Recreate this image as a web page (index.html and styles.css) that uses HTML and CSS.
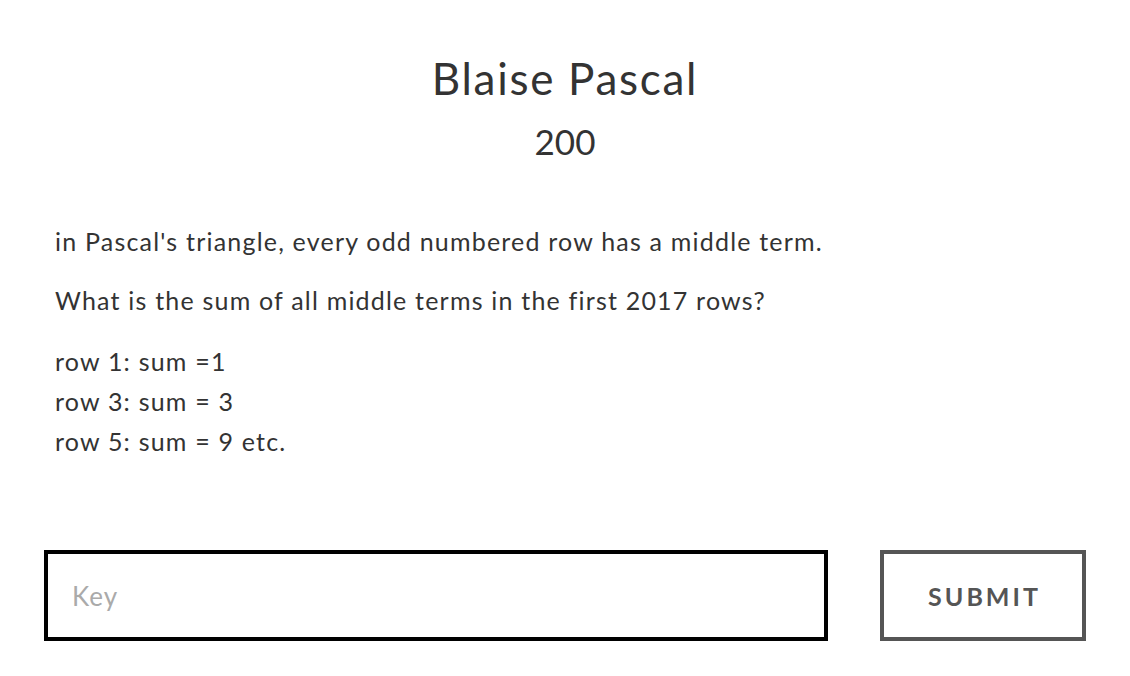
FILE: index.html
```html
<!DOCTYPE html>
<html>
<head>
<meta charset="utf-8">
<link rel="stylesheet" href="styles.css">
</head>
<body>
<div class="page">
  <header class="head">
    <h1 class="title">Blaise Pascal</h1>
    <div class="points">200</div>
  </header>
  <section class="desc">
    <p>in Pascal's triangle, every odd numbered row has a middle term.</p>
    <p>What is the sum of all middle terms in the first 2017 rows?</p>
    <p>row 1: sum =1<br>row 3: sum = 3<br>row 5: sum = 9 etc.</p>
  </section>
  <form class="answer">
    <input class="key" type="text" placeholder="Key">
    <button class="submit" type="button">SUBMIT</button>
  </form>
</div>
</body>
</html>
```
FILE: styles.css
```css
html, body {
  margin: 0;
  padding: 0;
  background: #fff;
}
body {
  font-family: Lato, "Open Sans", sans-serif;
  color: #333;
}
.page {
  padding: 0 44px 0 44px;
}
.head {
  text-align: center;
  padding-top: 48px;
}
.title {
  margin: 0;
  font-size: 44px;
  font-weight: 400;
  line-height: 60px;
  letter-spacing: 1.7px;
}
.points {
  font-size: 35px;
  line-height: 60px;
  padding-top: 3px;
}
.desc {
  margin-top: 50px;
  padding: 0 11px;
  font-size: 25px;
  line-height: 40px;
  letter-spacing: 1.2px;
}
.desc p {
  margin: 0 0 21px 0;
}
.desc p:first-child {
  margin-bottom: 19px;
}
.desc p:last-child {
  margin-bottom: 0;
}
.answer {
  display: flex;
  gap: 52px;
  margin-top: 89px;
}
.key {
  flex: 1;
  height: 91px;
  box-sizing: border-box;
  border: 4px solid #000;
  padding: 0 24px;
  font-family: Lato, sans-serif;
  font-size: 26px;
  letter-spacing: 1px;
  color: #333;
  outline: none;
}
.key::placeholder {
  color: #aaa;
}
.submit {
  width: 206px;
  height: 91px;
  box-sizing: border-box;
  border: 4px solid #555;
  background: #fff;
  color: #555;
  font-family: Lato, sans-serif;
  font-weight: 700;
  font-size: 25px;
  letter-spacing: 3px;
  padding: 0 0 0 3px;
}
```
